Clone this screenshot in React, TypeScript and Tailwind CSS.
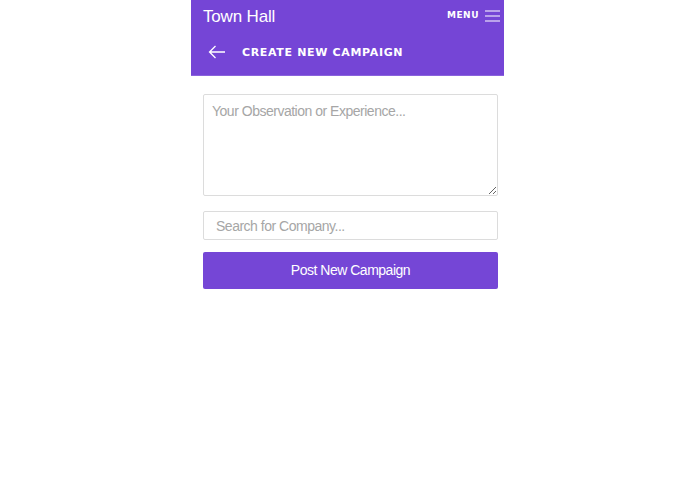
import React from 'react';

export default function App() {
    return (
        <div className="min-h-[494px] w-full bg-white font-['Liberation_Sans',Arial,sans-serif]">
            <div className="mx-auto w-[313px]">
                <Header />
                <CampaignForm />
            </div>
        </div>
    );
}

function Header() {
    return (
        <header className="bg-[#7545d6] border-b border-[#8a63dc]">
            <div className="flex h-[32px] items-center justify-between pl-[12px] pr-[4px]">
                <span className="text-[17px] text-white leading-none tracking-[-0.01em]">Town Hall</span>
                <button className="flex items-center gap-[6px] text-white">
                    <span className="text-[9px] font-bold tracking-[0.06em] font-['DejaVu_Sans',sans-serif]">
                        MENU
                    </span>
                    <svg width="15" height="12" viewBox="0 0 15 12" fill="none">
                        <path d="M0 1h15M0 6h15M0 11h15" stroke="#fff" strokeWidth="1.2" />
                    </svg>
                </button>
            </div>
            <div className="flex h-[43px] items-center pl-[17px]">
                <svg width="18" height="14" viewBox="0 0 18 14" fill="none" className="mb-[4px]">
                    <path d="M17 7H1.5M7.5 1 1.5 7l6 6" stroke="#fff" strokeWidth="1.3" />
                </svg>
                <h1 className="ml-[16px] text-[11px] font-bold tracking-[0.06em] text-white font-['DejaVu_Sans',sans-serif]">
                    CREATE NEW CAMPAIGN
                </h1>
            </div>
        </header>
    );
}

function CampaignForm() {
    return (
        <form className="ml-[12px] mt-[18px] flex w-[295px] flex-col">
            <textarea
                className="h-[102px] resize-y rounded-[2px] border border-[#dcdcdc] px-[8px] py-[6px] text-[14px] tracking-[-0.035em] text-gray-700 placeholder:text-[#a6a6a6] outline-none"
                placeholder="Your Observation or Experience..."
            />
            <input
                className="mt-[15px] h-[29px] rounded-[2px] border border-[#dcdcdc] px-[12px] text-[14px] tracking-[-0.035em] text-gray-700 placeholder:text-[#a6a6a6] outline-none"
                placeholder="Search for Company..."
            />
            <button
                type="button"
                className="mt-[12px] h-[37px] rounded-[2px] bg-[#7546d6] text-[14px] tracking-[-0.035em] text-white"
            >
                Post New Campaign
            </button>
        </form>
    );
}
